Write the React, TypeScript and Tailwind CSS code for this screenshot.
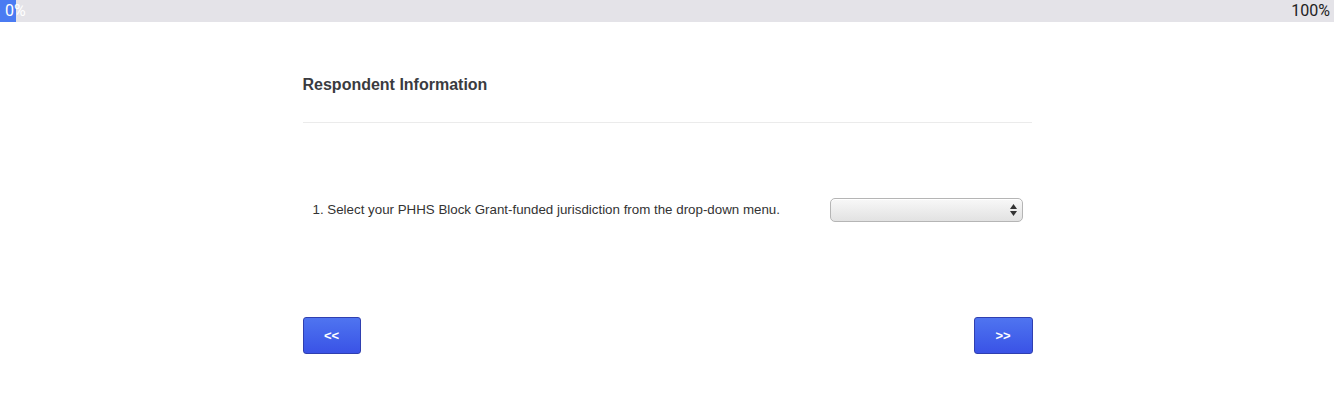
import React from "react";

export default function App() {
  return (
    <div className="min-h-[413px] w-full bg-white" style={{ fontFamily: '"Liberation Sans", Arial, sans-serif' }}>
      <div className="flex h-[22px] w-full items-center justify-between bg-[#e4e3e8] text-[16px] text-[#222]" style={{ fontFamily: 'Roboto, "Liberation Sans", sans-serif' }}>
        <div className="flex h-full w-[16px] items-center overflow-visible whitespace-nowrap bg-[#4a7bf2] pl-[5px] text-white">0%</div>
        <div className="pr-[4px]">100%</div>
      </div>
      <div className="mx-auto w-[729px]">
        <h1 className="mt-[53px] text-[16px] font-bold leading-[20px] text-[#3a3b40]">Respondent Information</h1>
        <div className="mt-[27px] h-px bg-[#ebebeb]" />
        <div className="mt-[75px] flex items-center">
          <div className="w-[527px] pl-[10px] text-[13.33px] text-[#333]">1. Select your PHHS Block Grant-funded jurisdiction from the drop-down menu.</div>
          <div className="flex h-[24px] w-[193px] items-center justify-end rounded-[5px] border border-[#b5b5b5] bg-gradient-to-b from-[#f8f8f8] to-[#e2e2e2] pr-[4px] shadow-[inset_0_1px_0_#fff]">
            <svg width="9" height="16" viewBox="0 0 9 16">
              <path d="M4.5 2 L8 7 L1 7 Z" fill="#333" />
              <path d="M4.5 14 L8 9 L1 9 Z" fill="#333" />
            </svg>
          </div>
        </div>
        <div className="mt-[95px] flex justify-between">
          <button className="flex h-[37px] w-[58px] items-center justify-center rounded-[3px] border border-[#2f3fb0] bg-gradient-to-b from-[#4f74f0] to-[#3a52e6] text-[13px] font-bold text-white">&lt;&lt;</button>
          <button className="mr-[-1px] flex h-[37px] w-[59px] items-center justify-center rounded-[3px] border border-[#2f3fb0] bg-gradient-to-b from-[#4f74f0] to-[#3a52e6] text-[13px] font-bold text-white">&gt;&gt;</button>
        </div>
      </div>
    </div>
  );
}
